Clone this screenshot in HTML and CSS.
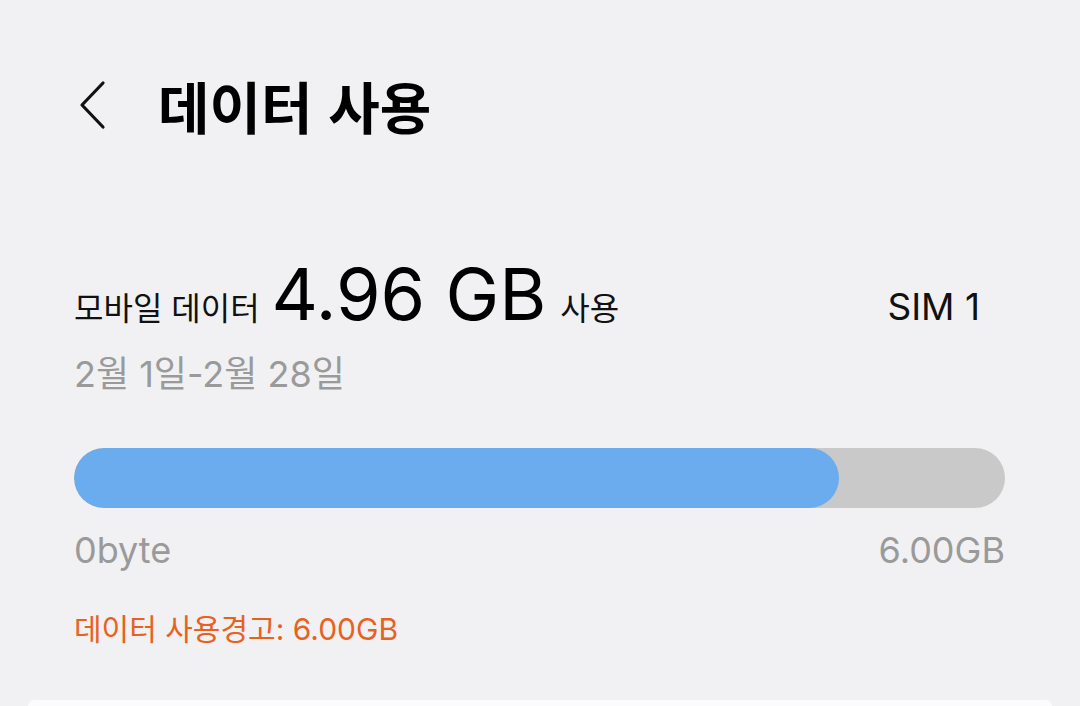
FILE: index.html
```html
<!DOCTYPE html>
<html lang="ko">
<head>
<meta charset="utf-8">
<link rel="stylesheet" href="styles.css">
</head>
<body>
<div class="screen">
  <header class="header">
    <svg class="back" width="30" height="50" viewBox="0 0 30 50" aria-hidden="true">
      <path d="M25 3 L4 25 L25 47" fill="none" stroke="#111" stroke-width="3.2" stroke-linecap="round" stroke-linejoin="round"/>
    </svg>
    <h1 class="title">데이터 사용</h1>
  </header>

  <section class="usage">
    <div class="usage-row">
      <div class="usage-main">
        <span class="label">모바일 데이터</span>
        <span class="amount">4.96 GB</span>
        <span class="label unit">사용</span>
      </div>
      <span class="sim">SIM 1</span>
    </div>
    <div class="period">2월 1일-2월 28일</div>

    <div class="bar">
      <div class="bar-fill" style="width: 82.2%"></div>
    </div>
    <div class="scale">
      <span>0byte</span>
      <span>6.00GB</span>
    </div>
    <div class="warning">데이터 사용경고: 6.00GB</div>
  </section>

  <div class="card"></div>
</div>
</body>
</html>
```

FILE: styles.css
```css
* { box-sizing: border-box; }
html, body {
  margin: 0;
  padding: 0;
  width: 1080px;
  height: 706px;
  overflow: hidden;
  background: #f1f1f3;
  font-family: Inter, "Noto Sans CJK KR", sans-serif;
  color: #111;
}
.screen {
  display: flex;
  flex-direction: column;
  height: 706px;
}
.header {
  display: flex;
  align-items: center;
  padding-left: 78px;
  padding-top: 52px;
  height: 158px;
}
.back {
  display: block;
  flex: none;
}
.title {
  margin: 0 0 0 50px;
  font-family: "Noto Sans CJK KR", sans-serif;
  font-size: 56px;
  font-weight: 700;
  color: #000;
  line-height: 1;
}
.usage {
  padding: 0 75px 0 74px;
  margin-top: 100px;
}
.usage-row {
  display: flex;
  align-items: baseline;
  justify-content: space-between;
}
.usage-main {
  display: flex;
  align-items: baseline;
  gap: 12px;
}
.label {
  font-family: "Noto Sans CJK KR", sans-serif;
  font-size: 32px;
  color: #111;
}
.unit {
  margin-left: 2px;
}
.amount {
  font-size: 72px;
  line-height: 1;
  color: #000;
}
.sim {
  font-size: 37px;
  margin-right: 25px;
  color: #111;
}
.period {
  margin-top: 22px;
  font-size: 36px;
  line-height: 44px;
  color: #9a9a9a;
}
.bar {
  margin-top: 52px;
  height: 60px;
  border-radius: 30px;
  background: #c9c9c9;
  overflow: hidden;
}
.bar-fill {
  height: 100%;
  background: #6aacee;
  border-radius: 30px;
}
.scale {
  display: flex;
  justify-content: space-between;
  margin-top: 20px;
  font-size: 36px;
  line-height: 44px;
  color: #9a9a9a;
}
.warning {
  margin-top: 38px;
  font-size: 30px;
  line-height: 38px;
  color: #e8621f;
}
.card {
  margin: auto 28px 0 28px;
  height: 6px;
  background: #fbfbfd;
  border-radius: 72px 72px 0 0;
}
```
